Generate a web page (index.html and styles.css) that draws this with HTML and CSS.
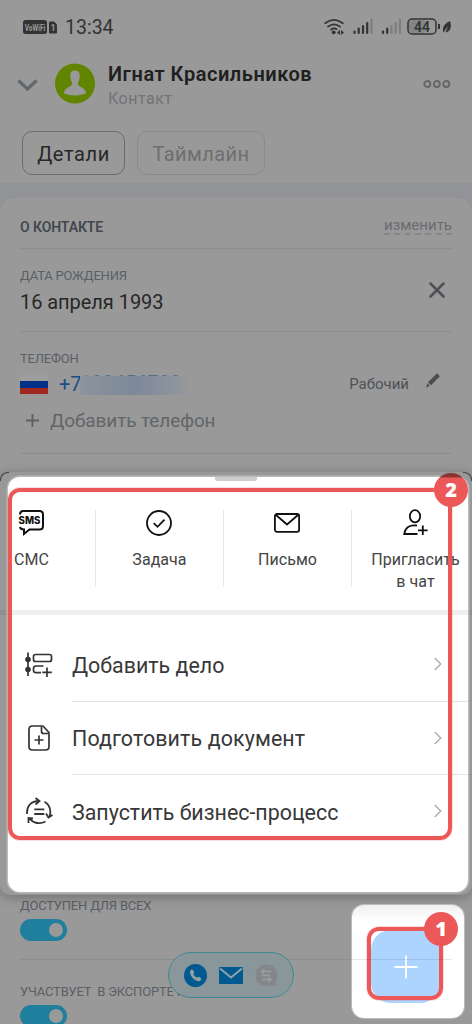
FILE: index.html
```html
<!DOCTYPE html>
<html lang="ru">
<head>
<meta charset="utf-8">
<title>Контакт</title>
<link rel="stylesheet" href="styles.css">
</head>
<body>
<main class="screen">
  <div class="status">
    <svg class="sim" width="34" height="15" viewBox="0 0 34 15"><rect width="24" height="14" rx="2.5" fill="#333"/><path d="M26 2.5Q26 1.5 27 1.5H31L34 4.5V12.5Q34 13.5 33 13.5H27Q26 13.5 26 12.5Z" fill="#333"/><text x="1.7" y="10.500" class="sim-text" textLength="20.500" lengthAdjust="spacingAndGlyphs">VoWiFi</text><text x="27.500" y="11" class="sim-text">1</text></svg>
    <span class="clock">13:34</span>
    <svg class="signals" width="128" height="18" viewBox="0 0 128 18">
      <g fill="none" stroke="#333" stroke-width="1.7" stroke-linecap="round"><path d="M1.200 5.200Q10 -1.500 18.800 5.200M4 8.700Q10 4 16 8.700M7 11.700Q10 9.500 12.500 11.200"/></g>
      <circle cx="9.700" cy="14.300" r="1.900" fill="#333"/><path d="M16 12V17L13 14.500ZM17 12V17L20 14.500Z" fill="#333"/>
      <g stroke="#333" stroke-width="2.200" stroke-linecap="round"><path d="M30.500 15V13.500M34.700 15V10.500M39 15V8M43.200 15V5M59 15V13.500M63.200 15V10.500"/><path stroke="#7e7e7e" d="M47.500 15V1.500M67.500 15V8M71.700 15V5M75.900 15V1.500"/></g>
      <rect x="84" y="1" width="28" height="15" rx="4" fill="none" stroke="#333" stroke-width="1.500"/><path d="M88 2H101V15H88Q85 15 85 12V5Q85 2 88 2Z" fill="#858585"/><path d="M115 6V11" stroke="#333" stroke-width="2"/>
      <text x="98" y="13.500" class="battery-text" text-anchor="middle">44</text>
      <path d="M126 3Q129 13 121.500 14.500L124 8L119.500 14.500Q117 7 126 3Z" fill="#333"/>
    </svg>
  </div>
  <header class="head">
    <svg width="22" height="14" viewBox="0 0 22 14" class="back"><path d="M1.500 2.500L10.500 11L19.500 2.500" fill="none" stroke="#63686e" stroke-width="3.200"/></svg>
    <svg width="40" height="41" viewBox="0 0 40 41" class="avatar"><circle cx="20" cy="20.500" r="20" fill="#628500"/><path d="M20 7.500C14.800 7.500 15 12.500 15.500 15.500C15.900 18 17.200 19 17.200 20.500C17.200 24.500 9 24 9 30.500Q20 34.500 31 30.500C31 24 22.800 24.500 22.800 20.500C22.800 19 24.100 18 24.500 15.500C25 12.500 25.200 7.500 20 7.500Z" fill="#999"/></svg>
    <div class="who"><h1 class="name">Игнат Красильников</h1><p class="kind">Контакт</p></div>
    <svg width="28" height="10" viewBox="0 0 28 10" class="more"><g fill="none" stroke="#666" stroke-width="1.900"><circle cx="4.300" cy="5" r="3"/><circle cx="13.800" cy="5" r="3"/><circle cx="23.300" cy="5" r="3"/></g></svg>
  </header>
  <nav class="tabs"><span class="tab active">Детали</span><span class="tab">Таймлайн</span></nav>
  <div class="backdrop">
    <section class="card">
      <div class="card-head"><h2 class="card-title">О КОНТАКТЕ</h2><span class="edit">изменить</span></div>
      <div class="field birth">
        <div><p class="label">ДАТА РОЖДЕНИЯ</p><p class="value">16 апреля 1993</p></div>
        <svg width="16" height="16" viewBox="0 0 16 16" class="clear"><path d="M1.500 1.500L14.500 14.500M14.500 1.500L1.500 14.500" stroke="#4d5156" stroke-width="2.500" stroke-linecap="round"/></svg>
      </div>
      <div class="field phone">
        <p class="label">ТЕЛЕФОН</p>
        <div class="phone-row">
          <span class="flag"></span><span class="prefix">+7</span>
          <span class="masked"><span class="digits">123456789</span><span class="smudge"></span></span>
          <span class="phone-type">Рабочий</span>
          <svg width="14" height="15" viewBox="0 0 14 15" class="pencil"><path d="M11 .3L13.900 3.200L5 12.200L2 9.200ZM1.300 10.200L3.900 12.900L.1 14.400Z" fill="#4a4e53"/></svg>
        </div>
        <div class="add-row"><svg width="13" height="13" viewBox="0 0 13 13"><path d="M6.500 0V13M0 6.500H13" stroke="#5e6266" stroke-width="1.900"/></svg><span class="add-text">Добавить телефон</span></div>
      </div>
      <div class="covered"></div>
      <div class="field shared"><p class="label">ДОСТУПЕН ДЛЯ ВСЕХ</p><span class="toggle"></span></div>
      <div class="field export"><p class="label">УЧАСТВУЕТ&nbsp; В ЭКСПОРТЕ К</p><span class="toggle"></span></div>
    </section>
  </div>

  <div class="pill">
    <svg width="23" height="23" viewBox="0 0 23 23"><circle cx="11.500" cy="11.500" r="11.500" fill="#005a91"/><path d="M6.500 6.300Q8 4.800 9 6.200L10.200 8.300Q10.300 9.200 9.200 10Q10.300 12.600 13 13.800Q14 12.500 14.800 12.800L16.900 14.300Q17.800 15.300 16.500 16.500C12.500 19.500 4 11 6.500 6.300Z" fill="#94a2a5"/></svg>
    <svg width="24" height="17" viewBox="0 0 24 17"><rect width="24" height="17" rx="1" fill="#005a91"/><path d="M1 1.500L12 10.500L23 1.500" fill="none" stroke="#94a2a5" stroke-width="2"/></svg>
    <svg width="23" height="23" viewBox="0 0 23 23"><path d="M11.500 .5A11 11 0 1 0 16 21.500L21.500 22L20.500 17.500A11 11 0 0 0 11.500 .5Z" fill="#85868a"/><path d="M7 7.500H16.500M6.500 11.500H15M7 15.500H15.500M9 5.500L6.500 7.500L9 9.500M13.500 13.500L16 15.500L13.500 17.500" fill="none" stroke="#979fa1" stroke-width="1.700"/></svg>
  </div>

  <section class="sheet">
    <div class="spot">
      <div class="actions">
        <div class="action">
          <svg width="30" height="30" viewBox="0 0 30 30"><path d="M4 6.500Q4 3 7 3H23.500Q27 3 27 6.500V18Q27 21.500 23.500 21.500H13.500L8 26V21.500Q4.500 21.500 4 19" fill="none" stroke="#111" stroke-width="2"/><text x="2.500" y="16.200" class="sms-text" textLength="22" lengthAdjust="spacingAndGlyphs">SMS</text></svg>
          <span>СМС</span></div>
        <div class="action">
          <svg width="30" height="30" viewBox="0 0 30 30"><circle cx="15" cy="15" r="12" fill="none" stroke="#111" stroke-width="1.800"/><path d="M9.700 15.200L13.500 18.800L20.500 11.700" fill="none" stroke="#111" stroke-width="1.800"/></svg>
          <span>Задача</span></div>
        <div class="action">
          <svg width="30" height="30" viewBox="0 0 30 30"><rect x="2.900" y="6" width="24.200" height="17.800" rx="2" fill="none" stroke="#111" stroke-width="1.800"/><path d="M4 7L15 16.500L26 7" fill="none" stroke="#111" stroke-width="1.800"/></svg>
          <span>Письмо</span></div>
        <div class="action">
          <svg width="30" height="30" viewBox="0 0 30 30"><ellipse cx="15" cy="8.300" rx="5.200" ry="6.100" fill="none" stroke="#111" stroke-width="1.800"/><path d="M17 17.500C9.500 16.500 5 19.500 4.200 26H17.500M22.800 17.500V27M18 22.300H27.600" fill="none" stroke="#111" stroke-width="1.800"/></svg>
          <span>Пригласить<br>в чат</span></div>
      </div>
      <div class="menu">
        <div class="item">
          <svg width="28" height="28" viewBox="0 0 28 28" class="item-icon"><g fill="none" stroke="#333" stroke-width="1.700"><path d="M3 2.500V26"/><rect x="8.500" y="4.500" width="18" height="7" rx="2"/><path d="M16 22.700H11Q8.500 22.700 8.500 20.500V18.500Q8.500 16 11 16H18.500M22 17.500V27M17.300 22.300H26.800"/></g><circle cx="3" cy="9.500" r="2.800" fill="#333"/><circle cx="3" cy="19.500" r="2.800" fill="#333"/></svg>
          <span class="item-text">Добавить дело</span><svg width="8" height="14" viewBox="0 0 8 14" class="chev"><path d="M.7 1L6.800 7L.7 13"/></svg></div>
        <div class="item">
          <svg width="28" height="28" viewBox="0 0 28 28" class="item-icon"><g fill="none" stroke="#333" stroke-width="1.700"><path d="M18 2H7.500Q4 2 4 5.500V22.500Q4 26 7.500 26H20.500Q24 26 24 22.500V8.500Z" stroke-linejoin="round"/><path d="M16.500 2.500V7.500Q16.500 9.500 18.500 9.500H23.500M14 11.500V20.500M9.500 16H18.500"/></g></svg>
          <span class="item-text document">Подготовить документ</span><svg width="8" height="14" viewBox="0 0 8 14" class="chev"><path d="M.7 1L6.800 7L.7 13"/></svg></div>
        <div class="item">
          <svg width="28" height="28" viewBox="0 0 28 28" class="item-icon"><g fill="none" stroke="#333" stroke-width="1.800"><path d="M2 17C1.500 9 6 4 14 4M10.500 1L14.500 4L10.500 7.500M19.500 4.800C25 8 26.500 13 24.500 20M27.500 18L23.500 20.500L21 16.500M20.500 24.500C15 27.500 8.500 26.500 4.500 21.500M3.500 26V21L8 21.500M9.300 12.300H19.300M9.300 17H19.300"/></g></svg>
          <span class="item-text">Запустить бизнес-процесс</span><svg width="8" height="14" viewBox="0 0 8 14" class="chev"><path d="M.7 1L6.800 7L.7 13"/></svg></div>
      </div>
      <span class="handle"></span>
    </div>
  </section>
  <div class="frame frame-menu"></div>
  <span class="badge badge-two">2</span>

  <div class="fab-spot"><span class="fab-line"></span><div class="fab"><svg width="24" height="24" viewBox="0 0 24 24"><path d="M12 .5V23.500M.5 12H23.500" stroke="#fff" stroke-width="1.800"/></svg></div></div>
  <div class="frame frame-fab"></div>
  <span class="badge badge-one">1</span>
</main>
</body>
</html>
```
FILE: styles.css
```css
* { box-sizing: border-box; }
body { margin: 0; background: #999; font-family: Roboto, "Noto Sans", sans-serif; }
h1, h2, p { margin: 0; font-weight: 400; }
svg { display: block; flex: none; }
.screen { position: relative; width: 472px; height: 1024px; overflow: hidden; background: #999; display: flex; flex-direction: column; }
.status { height: 54px; flex: none; display: flex; align-items: center; padding: 0 20px 0 23px; }
.sim-text { font: 700 9px Roboto, sans-serif; fill: #999; }
.clock { margin: 1px 0 0 8px; font-size: 19.5px; line-height: 24px; color: #333; }
.signals { margin-left: auto; }
.battery-text { font: 600 14px Roboto, sans-serif; fill: #333; }
.head { height: 77px; flex: none; display: flex; padding: 0 21px 0 17px; }
.back { margin-top: 24px; }
.avatar { margin: 9px 0 0 16px; }
.who { margin: 8px 0 0 13px; }
.name { font-size: 20px; font-weight: 600; line-height: 24px; letter-spacing: .53px; color: #202020; white-space: nowrap; }
.kind { margin-top: 1px; font-size: 16px; line-height: 24px; letter-spacing: .5px; color: #707377; }
.more { margin: 25px 0 0 auto; }
.tabs { height: 52px; flex: none; display: flex; gap: 12px; padding-left: 22px; }
.tab { width: 128px; height: 44px; border: 1.500px solid #888b8e; border-radius: 10px; font-size: 20px; line-height: 44px; letter-spacing: .45px; text-align: center; color: #6e6e6e; }
.tab.active { width: 103px; border-color: #6b6b6b; color: #272727; letter-spacing: .6px; }
.backdrop { flex: 1; background: #919396; padding-top: 15px; }
.card { height: 826px; background: #999; border-radius: 15px 15px 0 0; padding: 0 20px; }
.card-head { height: 51px; border-bottom: 1px solid #8c8d8e; display: flex; justify-content: space-between; padding-top: 17px; }
.card-title { font-size: 14px; font-weight: 600; line-height: 24px; letter-spacing: -.1px; color: #42474f; }
.edit { height: 20px; font-size: 15px; line-height: 20px; color: #696c70; border-bottom: 2px dashed #858789; }
.label { font-size: 13px; line-height: 16px; letter-spacing: -.2px; color: #5a5f66; white-space: nowrap; }
.birth { height: 83px; border-bottom: 1px solid #8c8d8e; padding-top: 19px; display: flex; justify-content: space-between; }
.value { font-size: 20px; line-height: 24px; margin-top: 6px; letter-spacing: -.05px; color: #272727; }
.clear { margin: 14px 7px 0 0; }
.phone { height: 122px; border-bottom: 1px solid #8c8d8e; padding-top: 19px; }
.phone-row { display: flex; height: 26px; margin-top: 4px; align-items: center; }
.flag { width: 28px; height: 19px; background: linear-gradient(#9d9d9d 30%, #003087 30%, #003087 66%, #a12821 66%); }
.prefix { width: 21px; margin-left: 11px; font-size: 20px; color: #174f87; }
.masked { position: relative; width: 108px; height: 20px; }
.digits { position: absolute; left: 0; top: -3px; font-size: 20px; line-height: 24px; color: #174f87; opacity: .55; }
.smudge { position: absolute; left: 0; top: 2px; width: 108px; height: 19px; background: linear-gradient(90deg, #8c949d, #7d8999 50%, #8f959d 90%, #969899); }
.phone-type { margin-left: auto; font-size: 15px; color: #4e5257; }
.pencil { margin: -7px 12px 0 17px; }
.add-row { display: flex; align-items: center; height: 26px; margin-top: 10px; padding-left: 6px; gap: 11px; }
.add-text { font-size: 19px; color: #616568; letter-spacing: -.1px; }
.covered { height: 442px; }
.shared { height: 64px; border-bottom: 1px solid #8c8d8e; padding-top: 2px; }
.export { padding-top: 24px; }
.toggle { display: flex; align-items: center; justify-content: flex-end; width: 47px; height: 22px; margin-top: 5px; padding-right: 4px; border-radius: 11px; background: #207f9d; }
.toggle::after { content: ""; width: 14px; height: 14px; border-radius: 50%; background: #999; }
.pill { position: absolute; left: 168px; top: 952px; width: 126px; height: 46px; border: 1px solid #3b8a90; border-radius: 23px; background: #89979b; display: flex; align-items: center; padding: 0 15px; gap: 12px; }
.sheet { position: absolute; left: 0; top: 472px; width: 472px; height: 423px; padding: 5px 4px 3px 8px; border-radius: 10px; background: linear-gradient(transparent 138px, #8f8f8f 138px, #8f8f8f 143px, transparent 143px), linear-gradient(transparent 228px, #888 228px, #888 229px, transparent 229px, transparent 302px, #888 302px, #888 303px, transparent 303px) right / 10px 100% no-repeat, #989898; box-shadow: 0 2px 12px rgba(0,0,0,.28); }
.sheet::before, .sheet::after { content: ""; position: absolute; top: 0; width: 8px; height: 8px; border-top: 1.500px solid #444; }
.sheet::before { left: 0; border-radius: 8px 0 0 0; border-left: 1px solid #444; }
.sheet::after { right: 0; border-radius: 0 8px 0 0; border-right: 1px solid #444; }
.spot { position: relative; width: 460px; height: 415px; border-radius: 12px; background: #fff; overflow: hidden; box-shadow: 0 0 0 1.500px #b9b9b9; }
.handle { position: absolute; left: 207px; top: -1px; width: 42px; height: 5px; border-radius: 2px; background: #ccc; }
.actions { height: 138px; margin-left: -40px; display: flex; padding-top: 33px; border-bottom: 5px solid #efefef; }
.action { width: 128px; height: 77px; flex: none; border-right: 1px solid #e8e8e8; display: flex; flex-direction: column; align-items: center; font-size: 16px; line-height: 21.500px; text-align: center; letter-spacing: .05px; color: #444; }
.action:last-child { border-right-color: transparent; }
.action svg { margin: -2px 1px 11px 0; }
.sms-text { font: 800 10px Inter, sans-serif; fill: #111; }
.item { height: 73.500px; display: flex; align-items: center; padding: 26px 26px 0 17px; position: relative; }
.item + .item::before { content: ""; position: absolute; left: 64px; right: 0; top: 12px; height: 1px; background: #e2e2e2; }
.item-icon { margin: -1px 19px 0 0; }
.item-text { margin-top: 2px; font-size: 21.400px; line-height: 26px; color: #383838; white-space: nowrap; }
.item-text.document { letter-spacing: .12px; }
.chev { margin: -1px 0 0 auto; }
.chev path { fill: none; stroke: #aaa; stroke-width: 1.300; }
.frame { position: absolute; border: 4px solid #ec5757; border-radius: 12px; box-shadow: 0 0 0 1px rgba(236,87,87,.2); }
.frame-menu { left: 8px; top: 488px; width: 444px; height: 352px; }
.frame-fab { left: 367px; top: 927px; width: 76px; height: 73px; }
.badge { position: absolute; width: 34px; height: 34px; border-radius: 50%; background: #ec5757; color: #fff; font: 800 20px/34px "Open Sans", sans-serif; text-align: center; }
.badge-two { left: 434px; top: 473px; background: linear-gradient(#8c3434 4px, #ec5757 5px); }
.badge-one { left: 424px; top: 912px; }
.fab-spot { position: absolute; left: 352px; top: 905px; width: 112px; height: 113px; border-radius: 12px; background: linear-gradient(#f0f0f0, #fff 16px); box-shadow: 0 0 0 1px #bbb; padding: 25px 24px 0 19px; }
.fab { height: 73px; border-radius: 20px; background: #add3ff; display: flex; align-items: center; justify-content: center; }
.fab-line { position: absolute; left: 0; top: 54px; width: 100px; height: 1px; background: rgba(60,70,80,.13); z-index: 1; }
```
